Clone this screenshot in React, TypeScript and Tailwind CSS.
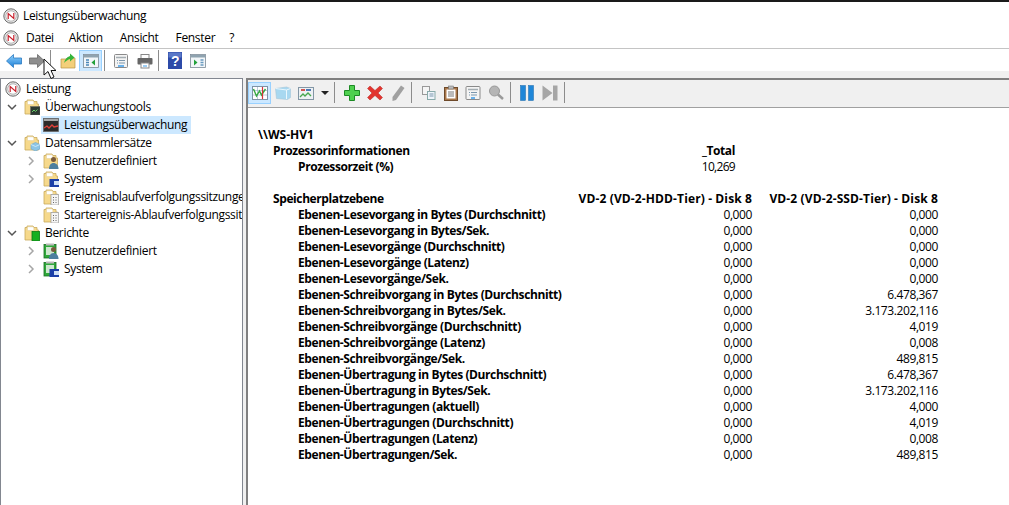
import React from 'react';

type IconProps = { className?: string };

const NoIcon = ({ className = 'w-4 h-4' }: IconProps) => (
    <svg viewBox="0 0 16 16" className={className}>
        <circle cx="8" cy="8" r="7.2" fill="#e4e4e4" stroke="#6f6f6f" strokeWidth="1" />
        <circle cx="8" cy="8" r="5.200" fill="#fff" stroke="#a8a8a8" strokeWidth="0.8" />
        <path d="M5.200 11V5.500l5.600 5V5" fill="none" stroke="#c8202c" strokeWidth="1.200" />
    </svg>
);

const Folder = ({ children }: { children?: React.ReactNode }) => (
    <svg viewBox="0 0 16 16" className="w-4 h-4 shrink-0">
        <path d="M1 2.500h2V1h6l1 1.500h3V5h1.500v10H1z" fill="#f6d98c" stroke="#c9a95c" strokeWidth="0.8" />
        <path d="M3.500 1.800h5.500l.8 1.200v2.500H3.500z" fill="#fff" stroke="#d8c48d" strokeWidth="0.4" />
        {children}
    </svg>
);

const toolsBadge = (
    <g>
        <rect x="6.500" y="7.500" width="9.500" height="8.500" fill="#2d3a32" stroke="#666" strokeWidth="0.5" />
        <path d="M8 13l2-2 1.500 1.500 2-2" fill="none" stroke="#6c6" strokeWidth="1" />
    </g>
);
const dataBadge = (
    <g>
        <path d="M7 9.500l4.500-2 4.500 2v4.500l-4.500 2-4.500-2z" fill="#8cc5e6" stroke="#6ea6c6" strokeWidth="0.6" />
        <path d="M7 9.500l4.500 2 4.500-2" fill="none" stroke="#d9f0fb" strokeWidth="0.8" />
    </g>
);
const userBadge = (
    <g>
        <circle cx="10.500" cy="6.500" r="2.500" fill="#7a5b3d" />
        <path d="M6 16c0-4 2-6 4.500-6s5 2 5 6z" fill="#4d7f9f" />
    </g>
);
const systemBadge = (
    <g>
        <rect x="6.500" y="8" width="9.500" height="8" fill="#1b3fa8" />
        <rect x="11" y="10" width="5" height="4" fill="#cfe0f5" />
    </g>
);
const fileBadge = (
    <g>
        <rect x="8" y="5.500" width="7.500" height="10.500" fill="#f4f4f4" stroke="#999" strokeWidth="0.7" />
        <path d="M10 8.500h1M12.500 8.500h1M10 11h1M12.500 11h1M10 13.500h1M12.500 13.500h1" stroke="#666" strokeWidth="1" />
    </g>
);
const greenBadge = (
    <rect x="8" y="6.500" width="7.500" height="9.500" fill="#18b020" stroke="#0b7a12" strokeWidth="0.8" />
);

const GreenFolder = ({ children }: { children: React.ReactNode }) => (
    <svg viewBox="0 0 16 16" className="w-4 h-4 shrink-0">
        <rect x="1" y="1.500" width="12" height="13.500" fill="#2fa83a" stroke="#1b6f24" strokeWidth="0.8" />
        <rect x="3" y="0.500" width="8" height="2" fill="#bbb" />
        <rect x="3" y="4" width="8" height="8" fill="#cfe8cf" />
        {children}
    </svg>
);

const MonitorIcon = () => (
    <svg viewBox="0 0 16 16" className="w-4 h-4 shrink-0">
        <rect x="0.500" y="1.500" width="15" height="13" fill="#2b2b2b" stroke="#666" strokeWidth="0.8" />
        <rect x="1" y="2" width="14" height="2" fill="#a8a8a8" />
        <path d="M1 11l3-2 2 2 3-3 2 2 4-1" fill="none" stroke="#e0413a" strokeWidth="1.300" />
    </svg>
);

const Chevron = ({ open }: { open?: boolean }) => (
    <svg viewBox="0 0 12 12" className="w-3 h-3 shrink-0">
        <path
            d={open ? 'M2 4l4 4 4-4' : 'M4 2l4 4-4 4'}
            fill="none"
            stroke={open ? '#555' : '#a6a6a6'}
            strokeWidth="1.500"
        />
    </svg>
);

const Sep = ({ className = '' }: IconProps) => (
    <div className={`w-px h-[21px] bg-[#8c8c8c] shrink-0 ${className}`} />
);

const Tool = ({
    children,
    active,
    className = '',
}: {
    children: React.ReactNode;
    active?: boolean;
    className?: string;
}) => (
    <div
        className={`w-[23px] h-[22px] flex items-center justify-center shrink-0 ${
            active ? 'bg-[#cce8ff] border border-[#99d1ff]' : ''
        } ${className}`}
    >
        {children}
    </div>
);

const S = ({ children, w = 16 }: { children: React.ReactNode; w?: number }) => (
    <svg width={w} height="16" viewBox={`0 0 ${w} 16`}>
        {children}
    </svg>
);

const rows = [
    ['Ebenen-Lesevorgang in Bytes (Durchschnitt)', '0,000', '0,000'],
    ['Ebenen-Lesevorgang in Bytes/Sek.', '0,000', '0,000'],
    ['Ebenen-Lesevorgänge (Durchschnitt)', '0,000', '0,000'],
    ['Ebenen-Lesevorgänge (Latenz)', '0,000', '0,000'],
    ['Ebenen-Lesevorgänge/Sek.', '0,000', '0,000'],
    ['Ebenen-Schreibvorgang in Bytes (Durchschnitt)', '0,000', '6.478,367'],
    ['Ebenen-Schreibvorgang in Bytes/Sek.', '0,000', '3.173.202,116'],
    ['Ebenen-Schreibvorgänge (Durchschnitt)', '0,000', '4,019'],
    ['Ebenen-Schreibvorgänge (Latenz)', '0,000', '0,008'],
    ['Ebenen-Schreibvorgänge/Sek.', '0,000', '489,815'],
    ['Ebenen-Übertragung in Bytes (Durchschnitt)', '0,000', '6.478,367'],
    ['Ebenen-Übertragung in Bytes/Sek.', '0,000', '3.173.202,116'],
    ['Ebenen-Übertragungen (aktuell)', '0,000', '4,000'],
    ['Ebenen-Übertragungen (Durchschnitt)', '0,000', '4,019'],
    ['Ebenen-Übertragungen (Latenz)', '0,000', '0,008'],
    ['Ebenen-Übertragungen/Sek.', '0,000', '489,815'],
];

const TreeRow = ({
    level,
    chevron,
    icon,
    label,
    selected,
}: {
    level: 0 | 1 | 2;
    chevron?: 'open' | 'closed';
    icon: React.ReactNode;
    label: string;
    selected?: boolean;
}) => (
    <div
        className={`h-[18px] flex items-center whitespace-nowrap ${
            level === 0 ? 'pl-[2px]' : level === 1 ? 'pl-[5px]' : 'pl-[24px]'
        }`}
    >
        {level > 0 && (
            <div className="w-3 mr-[4px] shrink-0">
                {chevron && <Chevron open={chevron === 'open'} />}
            </div>
        )}
        <div className={`h-[18px] flex items-center pl-[2px] pr-[4px] ${selected ? 'bg-[#cce8ff]' : ''}`}>
            <div className="shrink-0">{icon}</div>
            <span className="leading-[18px] ml-[5px]">{label}</span>
        </div>
    </div>
);

export default function App() {
    return (
        <div className="w-[1009px] h-[505px] overflow-hidden bg-white text-[12px] text-black flex flex-col relative font-['Open_Sans','Noto_Sans',sans-serif] tracking-[-0.32px]">
            <div className="h-[2px] bg-[#1a1a1a] shrink-0" />
            <div className="h-[26px] flex items-center pl-[3px] gap-[4px] shrink-0 pt-[1px]">
                <NoIcon />
                <span>Leistungsüberwachung</span>
            </div>
            <div className="h-[20px] flex items-center pl-[3px] shrink-0">
                <NoIcon />
                <div className="flex ml-[7px]">
                    <span>Datei</span>
                    <span className="ml-[15px]">Aktion</span>
                    <span className="ml-[17px]">Ansicht</span>
                    <span className="ml-[17px]">Fenster</span>
                    <span className="ml-[14px]">?</span>
                </div>
            </div>
            <div className="h-[23px] border-t border-[#c4c4c4] flex items-center pl-[2px] pt-[1px] shrink-0">
                <Tool>
                    <S>
                        <defs>
                            <linearGradient id="backFill" x1="0" y1="0" x2="0" y2="1">
                                <stop offset="0" stopColor="#8fd0fa" />
                                <stop offset="1" stopColor="#1d7fd8" />
                            </linearGradient>
                        </defs>
                        <path d="M0.500 8l7-6.500v3.500h8v6h-8v3.500z" fill="url(#backFill)" stroke="#2a78c0" strokeWidth="0.8" />
                    </S>
                </Tool>
                <Tool>
                    <S>
                        <path d="M15.500 8l-7-6.500v3.500h-8v6h8v3.500z" fill="#8e8e8e" stroke="#6a6a6a" strokeWidth="0.8" />
                    </S>
                </Tool>
                <Sep className="ml-[2px]" />
                <Tool className="ml-[5px]">
                    <S>
                        <path d="M1 6h5l1-1h8v10H1z" fill="#f3cf7a" stroke="#b99443" strokeWidth="0.7" />
                        <path d="M4 10c1-4 3-6 6-7V0.500l4.500 4-4.500 4V6c-2 .5-4 2-6 4z" fill="#35b53b" />
                    </S>
                </Tool>
                <Tool active>
                    <S>
                        <rect x="0.500" y="1.500" width="15" height="13" fill="#f2f6f9" stroke="#7c8b96" strokeWidth="0.8" />
                        <rect x="1" y="2" width="14" height="2.500" fill="#8fa3b0" />
                        <path d="M3 7h3M3 9.500h3M3 12h3" stroke="#4a86b8" strokeWidth="1.400" />
                        <path d="M12 6.500v6l-3.500-3z" fill="#22a13a" />
                    </S>
                </Tool>
                <Sep className="ml-[2px]" />
                <Tool className="ml-[4px]">
                    <S>
                        <rect x="1.500" y="1.500" width="13" height="13" rx="1" fill="#f4f4f4" stroke="#8a8a8a" />
                        <path d="M3 4.500h10" stroke="#a4adb2" strokeWidth="1.500" />
                        <path d="M4 7.500h1M6 7.500h6M4 10h1M6 10h6" stroke="#7b97ad" />
                        <path d="M5 13h6" stroke="#3a9be8" strokeWidth="1.500" />
                    </S>
                </Tool>
                <Tool className="ml-[1px]">
                    <S>
                        <rect x="4" y="1.500" width="8" height="4" fill="#fff" stroke="#888" />
                        <rect x="0.500" y="5" width="15" height="6.500" rx="1" fill="#666" />
                        <rect x="4" y="10" width="8" height="5" fill="#fff" stroke="#888" />
                        <path d="M6 13h4" stroke="#3a9be8" />
                    </S>
                </Tool>
                <Sep className="ml-[2px]" />
                <Tool className="ml-[4px]">
                    <svg width="14" height="17" viewBox="0 0 14 17">
                        <rect width="14" height="17" fill="#2c4aa8" />
                        <rect x="0.500" y="0.500" width="13" height="5" fill="#5a78c8" />
                        <text x="7" y="14" textAnchor="middle" fontSize="14" fontWeight="700" fill="#fff" fontFamily="Liberation Sans, sans-serif">
                            ?
                        </text>
                    </svg>
                </Tool>
                <Tool>
                    <S>
                        <rect x="0.500" y="1.500" width="15" height="13" fill="#f2f6f9" stroke="#7c8b96" strokeWidth="0.8" />
                        <rect x="1" y="2" width="14" height="2.500" fill="#8fa3b0" />
                        <path d="M10.500 7h3M10.500 9.500h3M10.500 12h3" stroke="#6a9ac0" strokeWidth="1.400" />
                        <path d="M4 6.500v6l3.500-3z" fill="#22a13a" />
                    </S>
                </Tool>
            </div>
            <div className="flex-1 min-h-0 bg-[#f0f0f0] pt-[7px] flex gap-[3px]">
                <div className="w-[243px] shrink-0 bg-white border border-[#828790] border-b-0 overflow-hidden pt-[1px]">
                    <TreeRow level={0} icon={<NoIcon />} label="Leistung" />
                    <TreeRow level={1} chevron="open" icon={<Folder>{toolsBadge}</Folder>} label="Überwachungstools" />
                    <TreeRow level={2} icon={<MonitorIcon />} label="Leistungsüberwachung" selected />
                    <TreeRow level={1} chevron="open" icon={<Folder>{dataBadge}</Folder>} label="Datensammlersätze" />
                    <TreeRow level={2} chevron="closed" icon={<Folder>{userBadge}</Folder>} label="Benutzerdefiniert" />
                    <TreeRow level={2} chevron="closed" icon={<Folder>{systemBadge}</Folder>} label="System" />
                    <TreeRow level={2} icon={<Folder>{fileBadge}</Folder>} label="Ereignisablaufverfolgungssitzungen" />
                    <TreeRow level={2} icon={<Folder>{fileBadge}</Folder>} label="Startereignis-Ablaufverfolgungssitzungen" />
                    <TreeRow level={1} chevron="open" icon={<Folder>{greenBadge}</Folder>} label="Berichte" />
                    <TreeRow level={2} chevron="closed" icon={<GreenFolder>{userBadge}</GreenFolder>} label="Benutzerdefiniert" />
                    <TreeRow level={2} chevron="closed" icon={<GreenFolder>{systemBadge}</GreenFolder>} label="System" />
                </div>
                <div className="flex-1 min-w-0 bg-white border-l-2 border-t-2 border-[#808080] flex flex-col">
                    <div className="h-[28px] bg-[#f0f0f0] border-b border-[#a0a0a0] flex items-center pb-[2px] shrink-0">
                        <Tool active>
                            <S>
                                <rect x="0.500" y="1.500" width="15" height="13" fill="#fff" stroke="#7f93a6" />
                                <path d="M1 5.500h14M1 10h14M5.500 2v12" stroke="#9db4c8" strokeWidth="0.7" />
                                <path d="M1.500 4l3 7 3-5 2 4 4-6" fill="none" stroke="#35a83f" strokeWidth="1.400" />
                                <path d="M10.500 2v12" stroke="#d8343a" strokeWidth="1.200" />
                            </S>
                        </Tool>
                        <Tool>
                            <S>
                                <path d="M0.500 3.500l11-1.500 4 1.500v9l-3 2-11-1z" fill="#a8d8f0" stroke="#a6c6d8" strokeWidth="0.6" />
                                <path d="M0.500 3.500l11 1.500 4-1.500M11.500 5v9" fill="none" stroke="#eaf7fd" strokeWidth="1" />
                            </S>
                        </Tool>
                        <Tool>
                            <S>
                                <rect x="0.500" y="2.500" width="15" height="12" fill="#edf1f4" stroke="#8396a5" />
                                <rect x="3" y="4" width="4" height="2" fill="#d3534f" />
                                <rect x="8" y="4" width="5" height="2" fill="#4e7ab5" />
                                <path d="M2 12l3-3 2 2 3-3 3 3" fill="none" stroke="#46a64e" strokeWidth="1.300" />
                            </S>
                        </Tool>
                        <svg width="8" height="4" viewBox="0 0 8 4" className="ml-[4px]">
                            <path d="M0 0h8L4 4z" fill="#222" />
                        </svg>
                        <Sep className="ml-[5px]" />
                        <Tool className="ml-[5px]">
                            <S>
                                <path d="M5.500 0.500h5v5h5v5h-5v5h-5v-5h-5v-5h5z" fill="#4fd04f" stroke="#1c8a24" />
                            </S>
                        </Tool>
                        <Tool>
                            <S>
                                <path d="M3 1l5 4.500L13 1l2.500 2.500L11 8l4.500 4.500L13 15l-5-4.500L3 15 .5 12.500 5 8 .5 3.500z" fill="#e2342e" stroke="#b52522" strokeWidth="0.5" />
                            </S>
                        </Tool>
                        <Tool>
                            <S>
                                <path d="M11 0.500l3.500 2.500L6 15l-3.500 1 0-4z" fill="#a0a0a0" />
                            </S>
                        </Tool>
                        <Sep className="ml-[2px]" />
                        <Tool className="ml-[5px]">
                            <S>
                                <rect x="1.500" y="1.500" width="7" height="8" fill="#f5f5f5" stroke="#999" />
                                <rect x="6.500" y="6.500" width="7.500" height="8" fill="#eef4fa" stroke="#8aa" />
                                <path d="M8.500 9h4M8.500 11h4" stroke="#7b97ad" />
                            </S>
                        </Tool>
                        <Tool className="-ml-px">
                            <S>
                                <rect x="1.500" y="2.500" width="13" height="13" fill="#a9774a" stroke="#6e4a2a" />
                                <rect x="3.500" y="4.500" width="9" height="9" fill="#fff" />
                                <rect x="5.500" y="1" width="5" height="3" fill="#bbb" stroke="#666" strokeWidth="0.5" />
                                <path d="M5 7h6M5 9h6M5 11h6" stroke="#777" />
                            </S>
                        </Tool>
                        <Tool className="-ml-px">
                            <S>
                                <rect x="1" y="1.500" width="14" height="13" rx="1" fill="#f4f4f4" stroke="#8a8a8a" />
                                <path d="M3 4.500h10" stroke="#a4adb2" strokeWidth="1.500" />
                                <path d="M4 7.500h1M6 7.500h6M4 10h1M6 10h6" stroke="#7b97ad" />
                                <path d="M6 13h4" stroke="#3a9be8" strokeWidth="1.500" />
                            </S>
                        </Tool>
                        <Tool>
                            <S>
                                <circle cx="6.500" cy="6" r="5" fill="#b5b5b5" stroke="#999" />
                                <path d="M10 9.500l5 4.500" stroke="#999" strokeWidth="2.500" />
                            </S>
                        </Tool>
                        <Sep className="ml-[3px]" />
                        <Tool className="ml-[4px]">
                            <S>
                                <rect x="1.500" y="0.500" width="5" height="15" fill="#1e86d8" stroke="#1767a8" strokeWidth="0.5" />
                                <rect x="9.500" y="0.500" width="5" height="15" fill="#1e86d8" stroke="#1767a8" strokeWidth="0.5" />
                            </S>
                        </Tool>
                        <Tool>
                            <S>
                                <path d="M0.500 0.500l10 7.500-10 7.500z" fill="#a6a6a6" />
                                <rect x="11" y="0.500" width="4.500" height="15" fill="#a6a6a6" />
                            </S>
                        </Tool>
                        <Sep className="ml-[3px]" />
                    </div>
                    <div className="pl-[10px] pt-[19px] font-bold leading-[16px] whitespace-nowrap">
                        <div className="tracking-[0px]">\\WS-HV1</div>
                        <div className="flex pl-[15px] tracking-[-0.4px]">
                            <span className="w-[402px]">Prozessorinformationen</span>
                            <span className="w-[60px] text-right">_Total</span>
                        </div>
                        <div className="flex pl-[40px] tracking-[-0.4px]">
                            <span className="w-[377px]">Prozessorzeit (%)</span>
                            <span className="w-[60px] text-right font-normal tracking-[-0.7px]">10,269</span>
                        </div>
                        <div className="flex pl-[15px] mt-[16px]">
                            <span className="w-[266px] tracking-[-0.4px]">Speicherplatzebene</span>
                            <span className="w-[213px] text-right tracking-[0.12px]">VD-2 (VD-2-HDD-Tier) - Disk 8</span>
                            <span className="w-[186px] text-right tracking-[0.12px]">VD-2 (VD-2-SSD-Tier) - Disk 8</span>
                        </div>
                        {rows.map(([label, a, b]) => (
                            <div key={label} className="flex pl-[40px] tracking-[-0.4px]">
                                <span className="w-[281px]">{label}</span>
                                <span className="w-[173px] text-right font-normal">{a}</span>
                                <span className="w-[186px] text-right font-normal">{b}</span>
                            </div>
                        ))}
                    </div>
                </div>
            </div>
            <svg width="14" height="22" viewBox="0 0 14 22" className="absolute left-[43px] top-[58px]">
                <path d="M1 1v16l4-3.500 3 7 3-1.500-3-6.500h5z" fill="#fff" stroke="#111" strokeWidth="1" />
            </svg>
        </div>
    );
}
